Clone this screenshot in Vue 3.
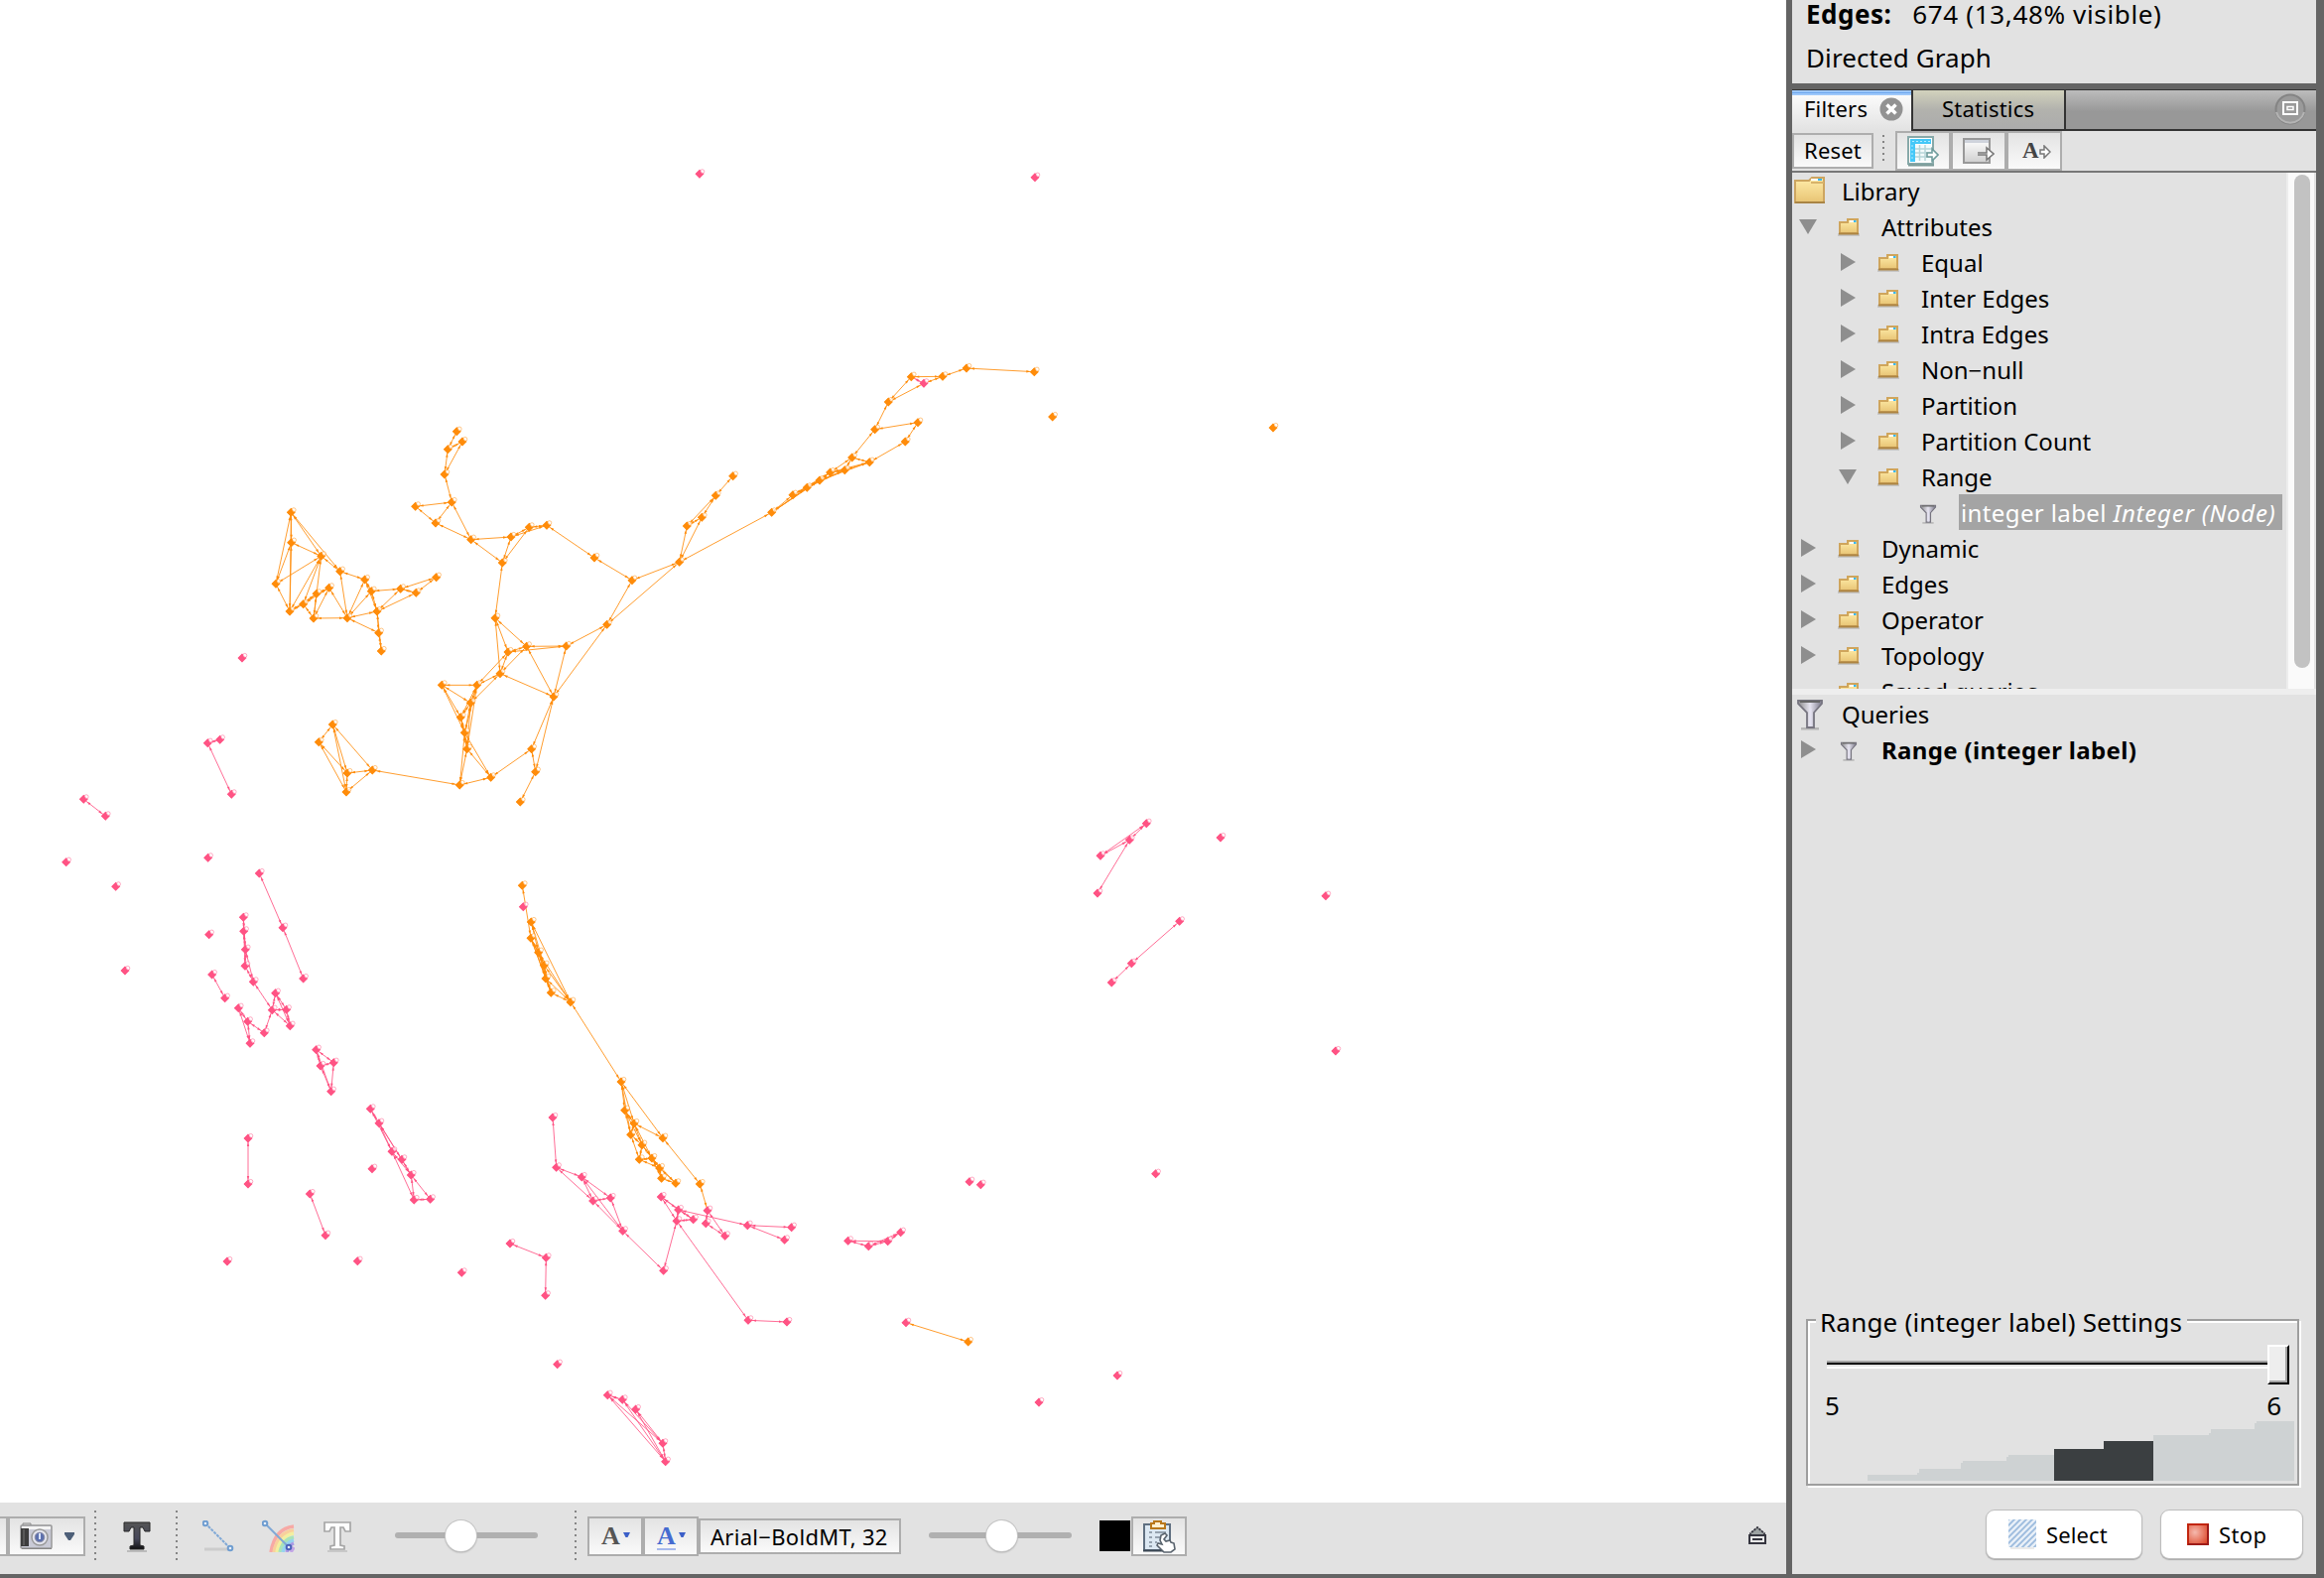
<script setup>
const ORANGE = '#ff8c0a'
const PINK = '#ff5384'

// Node positions are stored in thirds of a pixel, relative to the cluster origin.
const clusters = [
  {
    x: 260, y: 420, color: ORANGE, alt: [74],
    nodes: [[601,44],[618,75],[574,98],[564,174],[586,258],[476,271],[537,321],[644,371],[765,363],[820,334],[873,328],[739,441],[1017,426],[1131,494],
      [717,608],[812,694],[756,711],[732,776],[932,693],[1055,628],[894,846],
      [556,811],[662,811],[643,865],[613,908],[625,955],[632,1004],[704,1090],[610,1113],[827,1004],[839,1073],[793,1164],
      [226,930],[184,983],[270,1077],[346,1068],[267,1134],
      [100,289],[101,380],[191,421],[248,467],[54,505],[96,588],[137,566],[177,535],[215,517],[168,609],[270,608],[323,492],[343,527],[431,520],[478,532],[539,485],[360,588],[365,653],[373,708],
      [1274,439],[1297,330],[1342,304],[1384,238],[1436,179],[1553,289],[1617,236],[1660,214],[1698,192],[1730,168],[1774,161],[1796,123],[1849,137],[1865,38],[1957,75],[1995,17],[1906,-45],[1975,-121],[2013,-101],[2070,-122],[2142,-147],[2347,-136],[2402,0],[3069,33]],
    edges: '0-2 1-2 1-3 2-3 3-4 4-5 4-6 5-6 4-7 6-7 7-8 7-11 8-9 8-10 9-10 8-11 9-11 10-12 12-13 13-56 13-19 11-14 14-15 14-16 14-17 15-16 15-17 16-17 15-18 16-18 18-19 18-20 15-20 17-20 19-20 19-56 16-22 17-22 17-23 22-21 21-23 21-24 21-25 22-23 22-24 23-24 22-25 23-25 24-25 22-26 23-26 24-26 25-26 25-27 26-27 26-28 25-28 27-28 27-29 20-29 20-30 29-30 30-31 28-35 32-33 32-34 32-35 32-36 33-34 33-36 34-35 34-36 35-36 37-38 37-39 37-40 37-41 37-42 38-39 38-41 38-42 39-40 39-41 39-42 39-43 39-46 41-42 42-43 43-44 43-45 44-45 42-44 44-46 45-46 43-46 45-47 46-47 40-47 40-48 47-48 47-49 47-53 47-54 48-49 48-53 49-53 49-50 50-51 50-52 51-52 50-53 51-53 53-54 54-55 53-55 56-57 56-58 56-61 57-58 57-59 58-59 59-60 61-62 61-63 61-64 61-65 62-63 62-64 62-65 63-64 63-65 63-66 64-65 64-66 64-68 65-66 65-67 66-67 66-68 67-68 65-68 67-69 69-71 69-72 68-70 70-71 72-73 72-74 73-75 74-75 75-76 76-77',
    altEdges: '73-74'
  },
  {
    x: 50, y: 640, color: PINK, alt: [],
    nodes: [[478,326],[515,316],[550,481],[103,496],[169,547],[634,720],[705,884],[767,1038],[586,853],[587,895],[592,950],[591,1000],[616,1048],[491,1026],[530,1097],
      [683,1082],[673,1133],[716,1132],[727,1181],[649,1202],[599,1168],[571,1127],[606,1234],[806,1253],[859,1292],[819,1302],[851,1379],
      [970,1432],[996,1475],[1035,1561],[1065,1585],[1093,1632],[1102,1707],[1151,1705],[600,1521],[600,1659],[787,1689],[834,1814],
      [582,69],[50,686],[200,760],[479,673],[482,905],[228,1014],[975,1613],[537,1893],[931,1892],[1246,1927]],
    edges: '0-1 0-2 3-4 5-6 6-7 8-9 8-10 9-10 9-11 10-11 10-12 11-12 13-14 12-16 15-16 15-17 15-18 16-17 16-18 17-18 16-19 19-20 20-21 20-22 21-22 23-24 23-25 23-26 24-25 24-26 25-26 27-28 27-29 28-29 28-30 28-31 29-31 29-32 30-31 31-32 31-33 32-33 34-35 36-37',
    altEdges: ''
  },
  {
    x: 480, y: 860, color: ORANGE, alt: [20,21,22,23,24,25,26,27,28,29,30,31,32,33,34,35,36,37,38,39,40,41,42,43,44,46,47,48,49,50,51,52,53,54,55,56],
    nodes: [[139,97],[166,207],[165,256],[188,299],[205,338],[210,378],[226,421],[285,449],[438,690],[449,776],[477,816],[467,850],[501,881],[493,925],[531,921],[554,951],[560,982],[603,997],[564,860],[676,999],
      [142,161],[699,1079],[694,1118],[752,1156],[231,798],[242,949],[319,978],[353,1050],[406,1041],[443,1141],[566,1261],
      [559,1038],[611,1077],[606,1111],[656,1106],[820,1124],[953,1130],[932,1168],[822,1411],[939,1416],[1124,1171],[1186,1187],[1244,1172],[1283,1145],
      [1299,1418],[1487,1476],[102,1179],[211,1222],[209,1336],[397,1637],[442,1651],[482,1680],[564,1783],[572,1838],[1491,992],[1525,1001],[245,1544]],
    edges: '0-2 1-3 1-4 1-7 2-3 2-4 2-5 3-4 3-5 3-6 4-5 4-6 5-6 3-7 4-7 5-7 6-7 2-6 7-8 8-9 8-10 8-18 8-11 9-10 9-11 9-12 10-11 10-12 11-12 11-13 12-13 12-14 13-14 13-15 14-15 10-14 12-15 14-16 15-16 15-17 14-17 16-17 10-18 18-19 19-21 44-45',
    altEdges: '21-22 21-23 22-23 24-25 25-26 25-27 26-27 26-28 27-28 26-29 27-29 28-29 29-30 31-32 31-33 31-34 32-33 32-34 33-34 32-35 35-36 35-37 33-30 33-38 38-39 40-41 40-42 41-42 41-43 42-43 46-47 47-48 49-50 49-52 49-53 50-52 50-53 51-52 51-53 52-53'
  },
  {
    x: 0, y: 0, color: PINK, alt: [],
    nodes: [[2115,526],[3129,536],[3690,2532],[4008,2708],[4038,3177],[3494,3548],[3378,4158],[3141,4239],
      [3466,2489],[3415,2539],[3327,2587],[3318,2700],[3566,2785],[3421,2912],[3361,2970]],
    edges: '8-9 8-10 9-10 9-11 12-13 13-14',
    altEdges: ''
  }
]

const pairs = (s) => (s ? s.split(' ').map((p) => p.split('-').map(Number)) : [])

// Small arrow head whose tip stops just short of the node.
function head(from, to) {
  const dx = to[0] - from[0], dy = to[1] - from[1]
  const l = Math.hypot(dx, dy) || 1
  const ux = dx / l, uy = dy / l
  const tx = to[0] - ux * 4, ty = to[1] - uy * 4
  const bx = tx - ux * 4, by = ty - uy * 4
  return `M${tx} ${ty}L${bx - uy * 1.2} ${by + ux * 1.2}L${bx + uy * 1.2} ${by - ux * 1.2}Z`
}

const nodes = []
const lines = { [ORANGE]: '', [PINK]: '' }
const heads = { [ORANGE]: '', [PINK]: '' }
for (const c of clusters) {
  const pts = c.nodes.map(([x, y]) => [c.x + x / 3, c.y + y / 3])
  pts.forEach((p, i) => nodes.push({ x: p[0], y: p[1], color: c.alt.includes(i) ? PINK : c.color }))
  const add = (list, color) => {
    for (const [a, b] of pairs(list)) {
      lines[color] += `M${pts[a]}L${pts[b]}`
      heads[color] += head(pts[a], pts[b]) + head(pts[b], pts[a])
    }
  }
  add(c.edges, c.color)
  add(c.altEdges, PINK)
}

const tree = [
  { text: 'Attributes', level: 1, open: true },
  { text: 'Equal', level: 2 },
  { text: 'Inter Edges', level: 2 },
  { text: 'Intra Edges', level: 2 },
  { text: 'Non−null', level: 2 },
  { text: 'Partition', level: 2 },
  { text: 'Partition Count', level: 2 },
  { text: 'Range', level: 2, open: true },
  { text: 'integer label', type: 'Integer (Node)', level: 3, leaf: true },
  { text: 'Dynamic', level: 1 },
  { text: 'Edges', level: 1 },
  { text: 'Operator', level: 1 },
  { text: 'Topology', level: 1 },
  { text: 'Saved queries', level: 1, empty: true }
]
</script>

<template>
  <div class="app">
    <svg width="0" height="0" class="defs">
      <defs>
        <linearGradient id="gold" x1="0" y1="0" x2="0" y2="1"><stop offset="0" stop-color="#ffedaa" /><stop offset="1" stop-color="#e8c474" /></linearGradient>
        <linearGradient id="steel" x1="0" y1="0" x2="1" y2="0"><stop offset="0" stop-color="#8a8a8a" /><stop offset=".5" stop-color="#e6e4f0" /><stop offset="1" stop-color="#7a7888" /></linearGradient>
        <linearGradient id="darkT" x1="0" y1="0" x2="0" y2="1"><stop offset="0" stop-color="#555" /><stop offset=".6" stop-color="#46475a" /><stop offset="1" stop-color="#111" /></linearGradient>
        <linearGradient id="page" x1="0" y1="0" x2="0" y2="1"><stop offset="0" stop-color="#fff" /><stop offset="1" stop-color="#cfcfcf" /></linearGradient>
        <radialGradient id="red" cx=".35" cy=".4" r=".8"><stop offset="0" stop-color="#f5b9ad" /><stop offset="1" stop-color="#dc4426" /></radialGradient>
        <pattern id="hatch" width="6" height="6" patternUnits="userSpaceOnUse"><rect width="6" height="6" fill="#e9f0f8" /><path d="M-1 7L7 -1M-1 1L1 -1M5 7L7 5" stroke="#9dbcde" stroke-width="1.9" /></pattern>
        <symbol id="folder" viewBox="0 0 22 18">
          <path d="M0 15h22v3H0z" fill="#c6c6c6" />
          <path d="M2 4h8V1h10v14H2z" fill="url(#gold)" stroke="#cfa55c" stroke-width="2" />
          <path d="M1 15.5h20" stroke="#ad8442" stroke-width="2" />
          <path d="M12 2h4v2h-4z" fill="#fff" /><path d="M16 2h2.5v2H16z" fill="#35b8f5" />
        </symbol>
        <symbol id="funnel" viewBox="0 0 26 32">
          <path d="M4 29h18v2.500H4z" fill="#b5b5b5" />
          <path d="M1 2h24v3l-8 9v15h-7V14L1 5z" fill="url(#steel)" stroke="#777580" stroke-width="1.800" />
          <path d="M3 3h20" stroke="#666" stroke-width="2" /><path d="M13.500 10v18" stroke="#e4e2f0" stroke-width="2" />
        </symbol>
      </defs>
    </svg>

    <main class="workspace">
      <svg class="graph" width="1800" height="1514" viewBox="0 0 1800 1514">
        <g v-for="c in [ORANGE, PINK]" :key="c">
          <path :d="lines[c]" :stroke="c" fill="none" stroke-width="1" stroke-opacity=".85" />
          <path :d="heads[c]" :fill="c" />
        </g>
        <g v-for="(n, i) in nodes" :key="i" :transform="`translate(${n.x} ${n.y})`">
          <path d="M0 -4.500L4.500 0L0 4.500L-4.500 0Z" :fill="n.color" />
          <circle cx="2.700" cy="-2.500" r="2.100" fill="#fff" fill-opacity=".65" :stroke="n.color" stroke-opacity=".6" stroke-width=".8" />
          <path d="M-4.200 0L0 -4.200L2.300 0L0 4.200Z" :fill="n.color" />
        </g>
      </svg>

      <footer class="bottombar">
        <span class="btn cut"></span>
        <span class="btn camera">
          <svg width="34" height="28" viewBox="0 0 34 28">
            <path d="M3 1h8v4H3z" fill="#ddd" stroke="#888" /><rect x="1" y="3" width="31" height="23" rx="1" fill="#c9cad6" stroke="#999" stroke-width="1.500" />
            <path d="M2 4h29v3H2z" fill="#f4f4f4" /><rect x="1" y="6" width="8" height="18" fill="#3d3d3d" /><path d="M4 7v16" stroke="#777" />
            <circle cx="20" cy="15" r="8" fill="#e4e5ee" stroke="#999" stroke-width="1.500" /><circle cx="20" cy="15" r="4.800" fill="#5d70ad" stroke="#8a8da5" /><path d="M20 11v6" stroke="#d8e2ff" stroke-width="2" />
            <path d="M2 26.500h30" stroke="#888" />
          </svg>
          <svg width="10" height="8" viewBox="0 0 10 8"><path d="M0 0h10v2L6 8H4L0 2z" fill="#4d5f78" /></svg>
        </span>
        <span class="grip g1"></span>
        <svg class="i-t1" width="28" height="32" viewBox="0 0 28 32"><path d="M4 29h20v2H4z" fill="#bbb" /><path d="M1 1h26v9h-5L20 6h-3v18l4 1v3H7v-3l4-1V6H8L6 10H1z" fill="url(#darkT)" stroke="#262626" /></svg>
        <span class="grip g2"></span>
        <svg class="i-line" width="32" height="32" viewBox="0 0 32 32"><path d="M2 29h26" stroke="#ccc" stroke-width="3" /><path d="M3 3l25 25" stroke="#7fa8d6" stroke-width="2" stroke-dasharray="3 1" /><g fill="#e8f0fa" stroke="#6f9dd0" stroke-width="2"><circle cx="3" cy="3" r="2.300" /><circle cx="28" cy="28" r="2.300" /></g></svg>
        <svg class="i-rain" width="33" height="33" viewBox="0 0 33 33">
          <g fill="none" stroke-width="3.500"><path d="M9 33Q13 9 32 7" stroke="#f7a9a5" /><path d="M12 33Q16 13 32 11" stroke="#f9cf9c" /><path d="M15 33Q18 17 32 14" stroke="#f3efa0" /><path d="M18 33Q21 20 32 18" stroke="#a9e3b8" /><path d="M21 33Q24 23 32 21" stroke="#97d3ef" /><path d="M25 33Q27 26 32 24" stroke="#a99ae4" /><path d="M29 33L32 28" stroke="#c3a6e6" /></g>
          <path d="M3 4l25 25" stroke="#7fa8d6" stroke-width="2" /><circle cx="3" cy="4" r="2.300" fill="#e8f0fa" stroke="#6f9dd0" stroke-width="2" /><circle cx="27" cy="28" r="2.300" fill="#e8f0fa" stroke="#4b62b8" stroke-width="2" />
        </svg>
        <svg class="i-t2" width="28" height="32" viewBox="0 0 28 32"><path d="M4 29h20v2H4z" fill="#c8c8c8" /><path d="M1 1h26v9h-5L20 6h-3v18l4 1v3H7v-3l4-1V6H8L6 10H1z" fill="#fdfdfd" stroke="#a6a6a6" stroke-width="1.700" /></svg>
        <span class="slider s1"><i></i></span>
        <span class="grip g3"></span>
        <span class="btn letter"><b>A</b><svg width="7" height="6" viewBox="0 0 7 6"><path d="M0 0h7L4.500 5h-2z" fill="#3b5fc8" /></svg></span>
        <span class="btn letter blue"><b>A</b><svg width="7" height="6" viewBox="0 0 7 6"><path d="M0 0h7L4.500 5h-2z" fill="#3b5fc8" /></svg></span>
        <span class="btn font">Arial−BoldMT, 32</span>
        <span class="slider s2"><i></i></span>
        <span class="swatch"></span>
        <span class="btn clip">
          <svg width="34" height="33" viewBox="0 0 34 33">
            <path d="M2 4h26v26H2z" fill="#dce8f2" stroke="#5f6f80" stroke-width="2" /><path d="M1 30.500h28" stroke="#3c4854" stroke-width="2" />
            <path d="M9 3h3V1h7v2h4v5H9z" fill="#fff0d0" stroke="#b9781b" stroke-width="2" />
            <path d="M7 12h3m3 0h11M7 17h3m3 0h5M7 22h3m3 0h2M7 26h3" stroke="#7d8b99" stroke-width="1.600" />
            <path d="M19 15l4-2 2 2-3 4 2 2 4-1 1 2 3 1 1 6-4 3h-7l-7-7 1-2 4 1-2-4z" fill="#fff" stroke="#59636d" stroke-width="1.600" />
          </svg>
        </span>
        <svg class="i-up" width="18" height="18" viewBox="0 0 18 18"><path d="M2 9v-2l7-6 7 6v2z" fill="#9da3a3" stroke="#35353f" stroke-width="1.800" stroke-dasharray="2.500 .8" /><rect x="1" y="9" width="16" height="8" fill="#e8e8e8" stroke="#35353f" stroke-width="2" /><path d="M4 13h10" stroke="#35353f" stroke-width="2" /></svg>
      </footer>
    </main>

    <aside class="side">
      <section class="context">
        <p><b>Edges:</b><span class="count">674 (13,48% visible)</span></p>
        <p class="kind">Directed Graph</p>
      </section>

      <nav class="tabs">
        <div class="tab active">
          <span>Filters</span>
          <svg width="24" height="24" viewBox="0 0 24 24"><circle cx="12" cy="12" r="11.500" fill="#929292" /><path d="M7.500 7.500l9 9m0-9l-9 9" stroke="#fff" stroke-width="3.500" /></svg>
        </div>
        <div class="tab">Statistics</div>
        <div class="rest">
          <svg width="32" height="34" viewBox="0 0 32 34"><circle cx="16" cy="17" r="14.500" fill="#9a9a9a" stroke="#848484" stroke-width="2" /><path d="M2 20a14.500 14.500 0 0 0 28 0" fill="none" stroke="#b4b4b4" stroke-width="2" /><rect x="9" y="10" width="14" height="12" fill="none" stroke="#fff" stroke-width="2" /><rect x="13" y="14.500" width="6" height="3" fill="#9a9a9a" stroke="#fff" stroke-width="1.500" /></svg>
        </div>
      </nav>

      <div class="toolbar">
        <span class="btn reset">Reset</span>
        <span class="grip short"></span>
        <span class="btn tool">
          <svg width="32" height="32" viewBox="0 0 32 32"><rect x="1" y="1" width="25" height="27" fill="#fff" stroke="#87a9a9" stroke-width="2" /><path d="M3 3h21v5H3zM3 8h5v18H3z" fill="#45c8f8" /><path d="M5 5.500h18" stroke="#b5ecff" stroke-dasharray="2 2" /><path d="M5 9v16" stroke="#b5ecff" stroke-dasharray="2 2" /><path d="M8 9h16v16H8z" fill="#f3fbfc" /><path d="M8 13h16M8 17h16M8 21h16M12.500 9v16M18 9v16" stroke="#b7d6d9" stroke-width="1.500" /><path d="M1 29.500h26" stroke="#7a9a98" stroke-width="2" /><path d="M20 17h5v-4l6 6-6 6v-4h-5z" fill="#fff" stroke="#6f9c9c" stroke-width="1.600" /></svg>
        </span>
        <span class="btn tool">
          <svg width="32" height="32" viewBox="0 0 32 32"><rect x="1" y="3" width="26" height="24" fill="url(#page)" stroke="#999" stroke-width="2" /><path d="M2 4h24v3H2z" fill="#cfd3dc" /><path d="M15 17h9v-5l7 6-7 6v-5h-9" fill="#fff" stroke="#777" stroke-width="1.500" /></svg>
        </span>
        <span class="btn tool letters"><b>A</b><svg width="12" height="14" viewBox="0 0 12 14"><path d="M1 5h4V1l6 6-6 6V9H1z" fill="#fff" stroke="#777" stroke-width="1.500" /></svg></span>
      </div>

      <div class="library">
        <div class="tree">
          <div class="row root"><svg class="big" width="32" height="28" viewBox="0 0 32 28"><path d="M2 4h13l3-3h12v25H1V4z" fill="url(#gold)" stroke="#cda560" stroke-width="2" /><path d="M1 26h30" stroke="#a98445" stroke-width="2" /><path d="M17 2h8v2h-8z" fill="#fff" /><path d="M24 2h4v2h-4z" fill="#35b8f5" /><path d="M17 6h13" stroke="#d8b36a" stroke-width="2" /></svg><span>Library</span></div>
          <div v-for="r in tree" :key="r.text" class="row" :class="'l' + r.level">
            <span v-if="!r.leaf" class="twist">
              <svg v-if="r.open" width="18" height="15" viewBox="0 0 18 15"><path d="M0 0h18L9 15z" fill="#8e8e8e" /></svg>
              <svg v-else-if="!r.empty" width="15" height="18" viewBox="0 0 15 18"><path d="M0 0l15 9-15 9z" fill="#8e8e8e" /></svg>
            </span>
            <svg v-if="r.leaf" class="small-funnel" width="18" height="20"><use href="#funnel" /></svg>
            <svg v-else class="fold" width="22" height="18"><use href="#folder" /></svg>
            <span v-if="r.leaf" class="selected">{{ r.text }} <i>{{ r.type }}</i></span>
            <span v-else class="label">{{ r.text }}</span>
          </div>
        </div>
        <div class="scroll"><i></i></div>
      </div>

      <div class="queries">
        <div class="row root"><svg class="big-funnel" width="26" height="32"><use href="#funnel" /></svg><span>Queries</span></div>
        <div class="row l1">
          <span class="twist"><svg width="15" height="18" viewBox="0 0 15 18"><path d="M0 0l15 9-15 9z" fill="#8e8e8e" /></svg></span>
          <svg class="query-funnel" width="18" height="20"><use href="#funnel" /></svg>
          <b class="label">Range (integer label)</b>
        </div>
      </div>

      <section class="settings">
        <div class="legend">Range (integer label) Settings</div>
        <div class="range"><span class="track"></span><span class="knob"></span></div>
        <div class="bounds"><span>5</span><span>6</span></div>
        <svg class="histogram" width="430" height="60" viewBox="0 0 430 60" shape-rendering="crispEdges">
          <path d="M0 60V54H50V52H52V48H94V42H96V40H140V36H142V34H188V60Z" fill="#ced2d3" />
          <path d="M188 60V28H238V20H288V60Z" fill="#3b3f41" />
          <path d="M288 60V14H344V12H346V8H390V2H392V0H430V60Z" fill="#ced2d3" />
        </svg>
      </section>

      <div class="actions">
        <button class="select"><svg width="28" height="30" viewBox="0 0 28 30"><rect width="28" height="28" fill="url(#hatch)" /><path d="M2 29h24" stroke="#d5d5d5" /></svg>Select</button>
        <button class="stop"><svg width="22" height="22" viewBox="0 0 22 22"><rect x="1" y="1" width="20" height="20" fill="url(#red)" stroke="#c2250e" stroke-width="2" /><path d="M21 1v20H1" fill="none" stroke="#9e1b18" stroke-width="2" /></svg>Stop</button>
      </div>
    </aside>
  </div>
</template>

<style>
body { background: #fff; }
</style>

<style scoped>
.app { box-sizing: border-box; display: flex; width: 2342px; height: 1590px; overflow: hidden; background: #646464; color: #000; font-family: "Noto Sans", "Open Sans", sans-serif; font-size: 24px; }
.app * { box-sizing: border-box; }
.app svg { display: block; flex: none; }
.defs { position: absolute; }
.workspace { width: 1800px; height: 1586px; display: flex; flex-direction: column; flex: none; }
.graph { background: #fff; }
.bottombar { height: 72px; background: #e2e2e2; display: flex; align-items: flex-start; }
.btn { display: flex; align-items: center; flex: none; border: 2px solid #adadad; background: linear-gradient(#e3e3e3, #fafafa); }
.bottombar .btn { height: 40px; margin-top: 14px; }
.cut { width: 8px; border-left: 0; }
.bottombar .camera { width: 78px; padding-left: 10px; gap: 11px; }
.grip { width: 2px; flex: none; background: repeating-linear-gradient(#858585 0 2px, transparent 2px 6px); }
.bottombar .grip { height: 50px; margin-top: 8px; }
.g1 { margin-left: 9px; }
.i-t1 { margin: 19px 0 0 27px; }
.g2 { margin-left: 25px; }
.i-line { margin: 18px 0 0 25px; }
.i-rain { margin: 17px 0 0 28px; }
.i-t2 { margin: 19px 0 0 29px; }
.slider { height: 6px; width: 144px; border-radius: 3px; background: #b0b0b0; margin-top: 30px; display: flex; align-items: center; flex: none; }
.slider i { width: 31px; height: 31px; flex: none; border-radius: 50%; background: #fff; box-shadow: 0 0 0 1px #c4c4c4, 0 1px 2px #888; }
.s1 { margin-left: 44px; padding-left: 51px; }
.g3 { margin-left: 37px; }
.letter { width: 56px; padding-left: 12px; gap: 3px; }
.g3 + .letter { margin-left: 11px; }
.letter b { font: bold 26px/28px "Liberation Serif", serif; color: #555; }
.letter svg { margin-bottom: 3px; }
.letter.blue b { color: #456bd0; box-shadow: 0 -3px 0 -1px #a7b9ec inset; }
.bottombar .font { width: 204px; height: 36px; margin-top: 16px; padding: 0 0 1px 10px; font-size: 22px; white-space: nowrap; letter-spacing: .3px; }
.s2 { margin-left: 28px; padding-left: 58px; }
.swatch { width: 31px; height: 31px; margin: 18px 1px 0 28px; background: #000; }
.clip { width: 56px; padding-left: 9px; }
.i-up { margin: 24px 0 0 566px; }

.side { width: 528px; height: 1586px; margin-left: 6px; flex: none; background: #e2e2e2; display: flex; flex-direction: column; }
.context { height: 90px; border-bottom: 6px solid #646464; padding-left: 14px; font-size: 26px; white-space: nowrap; flex: none; }
.context p { margin: 0; height: 44px; line-height: 28px; }
.context b { letter-spacing: .5px; }
.count { margin-left: 21px; letter-spacing: .65px; }
.kind { letter-spacing: .1px; }
.tabs { height: 42px; display: flex; border-top: 1px solid #333; font-size: 22px; line-height: 37px; flex: none; }
.tab { width: 154px; padding-left: 29px; letter-spacing: .2px; background: linear-gradient(#d2d2bd, #b2b2ad 50%, #acacac); border-right: 2px solid #333; border-bottom: 2px solid #333; }
.tab.active { width: 122px; padding-left: 12px; display: flex; align-items: flex-start; gap: 12px; background: linear-gradient(#9dc8fb 0 2px, #6fa7ed 2px 3px, #9dc8fb 3px 5px, #fbfbfb 5px, #e2e2e2); border-bottom: 0; }
.tab.active svg { margin-top: 7px; }
.rest { flex: 1; background: linear-gradient(#bcbcbc, #989898 55%, #989898); border-bottom: 2px solid #333; display: flex; justify-content: flex-end; padding: 1px 10px 0 0; }
.rest svg { margin-top: 1px; }
.toolbar { height: 42px; display: flex; border-bottom: 2px solid #777; flex: none; align-items: flex-start; }
.reset { width: 82px; height: 36px; margin-top: 2px; padding: 0 0 2px 10px; font-size: 22px; letter-spacing: .2px; }
.short { height: 26px; margin: 4px 11px 0 9px; }
.tool { width: 56px; height: 40px; padding-left: 10px; }
.tool svg { margin-top: 1px; }
.letters b { font: bold 23px/24px "Liberation Serif", serif; color: #444; margin-left: 4px; }
.library { height: 526px; display: flex; border-bottom: 6px solid #eee; flex: none; }
.tree { width: 500px; height: 520px; overflow: hidden; border-right: 2px solid #ededed; }
.scroll { width: 26px; background: #fafafa; padding: 2px 0 0 6px; }
.scroll i { display: block; width: 16px; height: 497px; border-radius: 8px; background: #c2c2c2; }
.row { height: 36px; line-height: 38px; display: flex; align-items: flex-start; white-space: nowrap; }
.root .big { margin: 4px 16px 0 2px; }
.root .big-funnel { margin: 3px 19px 0 5px; }
.l1 { padding-left: 7px; }
.l2 { padding-left: 47px; }
.l3 { padding-left: 128px; }
.twist { width: 18px; height: 36px; display: flex; align-items: center; justify-content: center; flex: none; }
.fold { margin: 10px 22px 0 21px; }
.small-funnel { margin: 10px 22px 0 0; }
.query-funnel { margin: 10px 24px 0 23px; }
.selected { width: 326px; height: 36px; padding-left: 2px; background: #a4a4a4; color: #fff; letter-spacing: .38px; }
.selected i { letter-spacing: .75px; }
.queries { height: 629px; padding-top: 1px; flex: none; }
.queries .row { line-height: 37px; }
.queries b { letter-spacing: .35px; }
.settings { margin-left: 14px; width: 497px; height: 168px; border: 2px solid #9e9e9e; box-shadow: 2px 2px 0 #fff, inset 2px 2px 0 #fff; flex: none; }
.legend { width: 374px; margin: -17px 0 0 8px; padding-left: 4px; background: #e2e2e2; font-size: 26px; line-height: 36px; white-space: nowrap; letter-spacing: .2px; }
.range { display: flex; margin: 5px 0 0 19px; align-items: center; height: 40px; }
.track { width: 444px; height: 8px; background: linear-gradient(#a4a4a4 0 2px, #000 2px 4px, #e2e2e2 4px 6px, #fff 6px 8px); }
.knob { width: 22px; height: 40px; background: #eee; border: 2px solid; border-color: #fff #000 #000 #fff; box-shadow: inset -2px -2px 0 #a4a4a4; }
.bounds { display: flex; justify-content: space-between; margin: 3px 16px 0 17px; font-size: 26px; line-height: 36px; }
.histogram { margin: -2px 0 0 60px; }
.actions { display: flex; gap: 18px; padding: 24px 0 0 195px; }
.actions button { height: 50px; border: 1px solid #bdbdbd; border-radius: 9px; background: #fff; box-shadow: 0 1px 1px #aaa; display: flex; align-items: center; gap: 10px; padding: 0 0 0 22px; font: 22px "Noto Sans", sans-serif; letter-spacing: .1px; color: #000; white-space: nowrap; }
.actions .select { width: 158px; }
.actions .stop { width: 144px; padding-left: 26px; letter-spacing: .4px; }
</style>
